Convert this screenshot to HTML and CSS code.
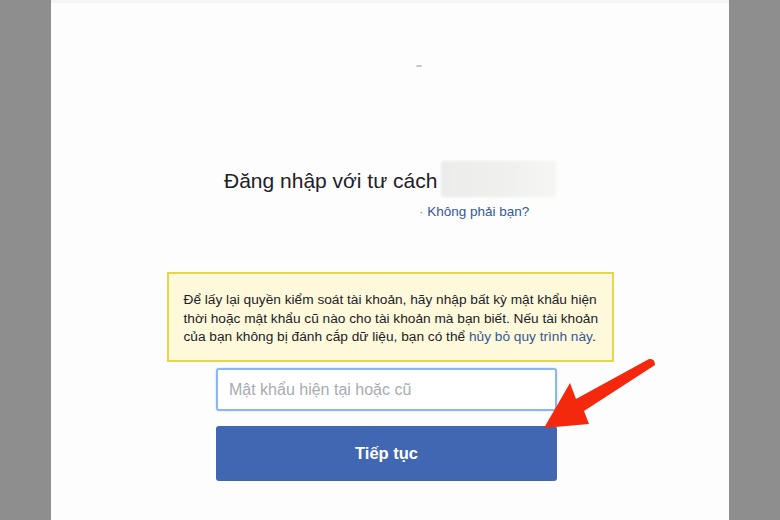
FILE: index.html
```html
<!DOCTYPE html>
<html lang="vi">
<head>
    <meta charset="UTF-8">
    <meta name="viewport" content="width=device-width, initial-scale=1.0">
    <title>Đăng nhập</title>
    <link rel="stylesheet" href="styles.css">
</head>
<body>
    <div class="page">
        <div class="top-mark"></div>

        <div class="login-as">
            <h1 class="login-title">Đăng nhập với tư cách</h1>
            <div class="name-blur"></div>
        </div>
        <div class="not-you">
            <span class="dot">·</span> <a href="#">Không phải bạn?</a>
        </div>

        <div class="notice">
            Để lấy lại quyền kiểm soát tài khoản, hãy nhập bất kỳ mật khẩu hiện<br>
            thời hoặc mật khẩu cũ nào cho tài khoản mà bạn biết. Nếu tài khoản<br>
            của bạn không bị đánh cắp dữ liệu, bạn có thể <a href="#">hủy bỏ quy trình này</a>.
        </div>

        <form class="pass-form">
            <input class="pass-input" type="password" placeholder="Mật khẩu hiện tại hoặc cũ">
            <button class="btn-continue" type="button">Tiếp tục</button>
        </form>
    </div>

    <!-- red pointer arrow over the button -->
    <svg class="arrow" viewBox="0 0 780 520" width="780" height="520">
        <path d="M544 428 L570 383 L576 399 L649 359 Q655 358 655 365 L584 411 L589 424 Z" fill="#f4280c"/>
    </svg>
</body>
</html>
```

FILE: styles.css
```css
body {
    margin: 0;
    padding: 0;
    background-color: #8e8e8e;
    font-family: 'Liberation Sans', Arial, sans-serif;
    height: 520px;
    overflow: hidden;
    position: relative;
}

.page {
    width: 678px;
    height: 520px;
    margin-left: 51px;
    background-color: #fdfdfd;
    border-top: 3px solid #f5f5f5;
    box-sizing: border-box;
    display: flex;
    flex-direction: column;
    align-items: center;
}

.top-mark {
    width: 6px;
    height: 2px;
    margin-top: 62px;
    margin-left: 58px;
    background-color: #c8c8c8;
    border-radius: 1px;
}

.login-as {
    display: flex;
    align-items: center;
    margin-top: 94px;
    width: 332px;
}

.login-title {
    margin: 3px 0 0;
    font-size: 21px;
    font-weight: normal;
    color: #1d2129;
    white-space: nowrap;
}

.name-blur {
    width: 118px;
    height: 36px;
    margin-left: 4px;
    background: linear-gradient(to right, #ececec, #f0f0ee 60%, #f6f6f4);
    border-radius: 2px;
    filter: blur(1px);
}

.not-you {
    width: 332px;
    margin-top: 7px;
    padding-left: 195px;
    box-sizing: border-box;
    font-size: 13.5px;
    color: #90949c;
}

.not-you a,
.notice a {
    color: #365899;
    text-decoration: none;
}

.notice {
    width: 447px;
    margin-top: 53px;
    padding: 17px 10px 13px 15px;
    box-sizing: border-box;
    background-color: #fdf9da;
    border: 2px solid #e6d64c;
    font-size: 13.7px;
    line-height: 18.5px;
    color: #1d2129;
    white-space: nowrap;
}

.pass-form {
    display: flex;
    flex-direction: column;
    gap: 15px;
    margin-top: 6px;
    margin-left: -7px;
}

.pass-input {
    width: 341px;
    height: 43px;
    padding: 2px 11px 0;
    box-sizing: border-box;
    border: 2px solid #8bb7f0;
    border-radius: 3px;
    font-family: inherit;
    font-size: 16px;
    color: #1d2129;
    outline: none;
    box-shadow: 0 0 2px #bcd6f7;
}

.pass-input::placeholder {
    color: #a7abb1;
}

.btn-continue {
    width: 341px;
    height: 55px;
    padding-top: 2px;
    border: none;
    border-radius: 3px;
    background-color: #4267b2;
    color: #ffffff;
    font-family: inherit;
    font-size: 16.5px;
    font-weight: bold;
    cursor: pointer;
}

.arrow {
    position: absolute;
    top: 0;
    left: 0;
    pointer-events: none;
}
```
